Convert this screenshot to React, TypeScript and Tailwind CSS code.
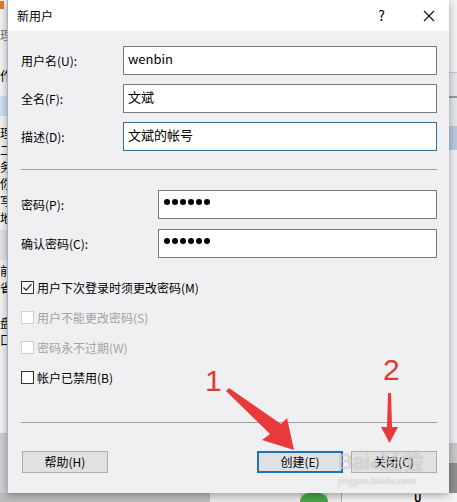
import React from 'react';

const font = { fontFamily: '"Noto Sans CJK SC", "Noto Sans", sans-serif' };

function Field({ label, value, focused, labelWidth }: { label: string; value: React.ReactNode; focused?: boolean; labelWidth: string }) {
  return (
    <div className="flex items-center h-[29px]">
      <div className={`${labelWidth} shrink-0 text-[12px] text-black`}>{label}</div>
      <div
        className={`flex-1 h-[29px] bg-white border ${focused ? 'border-[#2e7395]' : 'border-[#7a7a7a]'} pl-[4px] pt-[3px] text-[13px] leading-[18px] text-black`}
      >
        {value}
      </div>
    </div>
  );
}

function Dots() {
  return (
    <div className="flex gap-[2px] pt-[5px] pl-[1px]">
      {[0, 1, 2, 3, 4, 5].map((i) => (
        <div key={i} className="w-[6px] h-[6px] rounded-full bg-black" />
      ))}
    </div>
  );
}

function Check({ label, checked, disabled }: { label: string; checked?: boolean; disabled?: boolean }) {
  return (
    <div className="flex items-center h-[13px] gap-[3px]">
      <div
        className={`w-[13px] h-[13px] border bg-white flex items-center justify-center ${disabled ? 'border-[#cfcfcf]' : 'border-[#333333]'}`}
      >
        {checked && (
          <svg width="11" height="11" viewBox="0 0 11 11">
            <path d="M1.5 5.5 L4.2 8.2 L9.5 2.2" fill="none" stroke="#222" strokeWidth="1.2" />
          </svg>
        )}
      </div>
      <span className={`text-[12px] leading-[13px] ${disabled ? 'text-[#a3a3a3]' : 'text-black'}`}>{label}</span>
    </div>
  );
}

function Button({ label, primary }: { label: string; primary?: boolean }) {
  return (
    <div
      className={`w-[86px] h-[22px] flex items-center justify-center text-[12px] text-black bg-[#e1e1e1] ${primary ? 'border-2 border-[#1d72b8]' : 'border border-[#adadad]'}`}
    >
      {label}
    </div>
  );
}

export default function App() {
  return (
    <div className="relative w-[457px] h-[502px] overflow-hidden bg-[#d9d9d9]" style={font}>
      <div className="flex h-[493px]">
        {/* window behind, left edge */}
        <div className="w-[7px] shrink-0 bg-[#f3f3f3] flex flex-col text-[12px] leading-[13px] overflow-hidden text-black">
          <div className="h-[10px] bg-[#f5f5f5]">
            <div className="w-[4px] h-[8px] bg-[#e07b2a] mt-[1px]" />
          </div>
          <div className="mt-[18px] text-[#777]">理</div>
          <div className="mt-[28px]">作</div>
          <div className="mt-[14px] h-[20px] bg-[#cfe0f3]" />
          <div className="mt-[10px] flex flex-col gap-[4px]">
            <span>理</span>
            <span>二</span>
            <span>务</span>
            <span>你</span>
            <span>写</span>
            <span>地</span>
          </div>
          <div className="mt-[6px] h-[30px] bg-[#e3e3e3]" />
          <div className="mt-[4px] flex flex-col gap-[4px]">
            <span>前</span>
            <span>省</span>
          </div>
          <div className="mt-[22px] flex flex-col gap-[4px]">
            <span>盘</span>
            <span>口</span>
          </div>
          <div className="flex-1" />
          <div className="h-[60px] bg-[#d0d0d0]" />
        </div>

        {/* dialog */}
        <div className="w-[442px] shrink-0 flex flex-col border-l border-[#9fb4c8] shadow-[0_2px_8px_rgba(0,0,0,0.35)] z-10">
          <div className="h-[31px] bg-white flex items-center pl-[9px] pr-[14px] text-[12px] text-black">
            <span>新用户</span>
            <span className="ml-auto mr-[38px] text-[14px]">?</span>
            <svg width="12" height="12" viewBox="0 0 12 12">
              <path d="M1 1 L11 11 M11 1 L1 11" stroke="#111" strokeWidth="1.1" />
            </svg>
          </div>

          <div className="flex-1 bg-[#f0eff2] pl-[13px] pr-[12px] pt-[15px] flex flex-col">
            <div className="flex flex-col gap-[9px]">
              <Field label="用户名(U):" value="wenbin" labelWidth="w-[102px]" />
              <Field label="全名(F):" value="文斌" labelWidth="w-[102px]" />
              <Field label="描述(D):" value="文斌的帐号" focused labelWidth="w-[102px]" />
            </div>

            <div className="mt-[18px] h-px bg-[#a0a0a0]" />

            <div className="mt-[20px] flex flex-col gap-[10px]">
              <Field label="密码(P):" value={<Dots />} labelWidth="w-[137px]" />
              <Field label="确认密码(C):" value={<Dots />} labelWidth="w-[137px]" />
            </div>

            <div className="mt-[23px] flex flex-col gap-[17px]">
              <Check label="用户下次登录时须更改密码(M)" checked />
              <Check label="用户不能更改密码(S)" disabled />
              <Check label="密码永不过期(W)" disabled />
              <Check label="帐户已禁用(B)" />
            </div>

            <div className="mt-[38px] h-px bg-[#a0a0a0]" />

            <div className="mt-[28px] flex items-center">
              <div className="ml-[1px]">
                <Button label="帮助(H)" />
              </div>
              <div className="ml-auto flex gap-[8px]">
                <Button label="创建(E)" primary />
                <Button label="关闭(C)" />
              </div>
            </div>
          </div>
        </div>

        {/* right edge */}
        <div className="flex-1 flex flex-col bg-[#eef0f3]">
          <div className="h-[72px] bg-[#f2f4f6]" />
          <div className="h-[24px] bg-[#e6e8eb] border-t border-[#c8c8c8]" />
          <div className="h-[2px] bg-[#9a9a9a]" />
          <div className="h-[28px] bg-[#e4e7ea]" />
          <div className="h-[24px] bg-[#b8c9de]" />
          <div className="flex-1" />
          <div className="h-[20px] bg-[#c9c9c9]" />
          <div className="h-[30px] bg-[#8f8f8f]" />
        </div>
      </div>

      {/* desktop strip below */}
      <div className="flex h-[9px]">
        <div className="w-[210px] bg-[#bdbdbd]" />
        <div className="w-[90px] bg-[#e9e9e9]" />
        <div className="w-[28px] bg-[#49a44a] rounded-t-full" />
        <div className="w-[14px] bg-[#ececec] border-r border-[#b0b0b0]" />
        <div className="flex-1 bg-[#f4f4f4] text-[10px] leading-[9px] pl-[72px] font-bold">U</div>
      </div>

      {/* annotations */}
      <svg className="absolute inset-0 z-20 pointer-events-none" width="457" height="502" viewBox="0 0 457 502">
        <polygon points="226,391 229,388 281,424 287,418 294,450 262,440 270,434" fill="#e8393b" />
        <polygon points="388,393 391,393 392,427 398,427 389.5,443 381,427 387,427" fill="#e8393b" />
      </svg>
      <div className="absolute z-20 left-[205px] top-[366px] text-[30px] leading-[30px] text-[#e0393c] pointer-events-none" style={{ fontFamily: '"Liberation Sans", sans-serif' }}>
        1
      </div>
      <div className="absolute z-20 left-[383px] top-[355px] text-[30px] leading-[30px] text-[#e0393c] pointer-events-none" style={{ fontFamily: '"Liberation Sans", sans-serif' }}>
        2
      </div>
      <div className="absolute z-20 left-[338px] top-[450px] flex flex-col items-start pointer-events-none">
        <span className="text-[22px] leading-[24px] text-white/60 [text-shadow:0_0_1px_rgba(0,0,0,0.35)]" style={{ fontFamily: '"Liberation Sans", "Noto Sans CJK SC", sans-serif' }}>
          Bai<span className="text-[16px]">●</span>经验
        </span>
        <span className="text-[9px] leading-[10px] text-white/60 [text-shadow:0_0_1px_rgba(0,0,0,0.3)]">jingyan.baidu.com</span>
      </div>
    </div>
  );
}
